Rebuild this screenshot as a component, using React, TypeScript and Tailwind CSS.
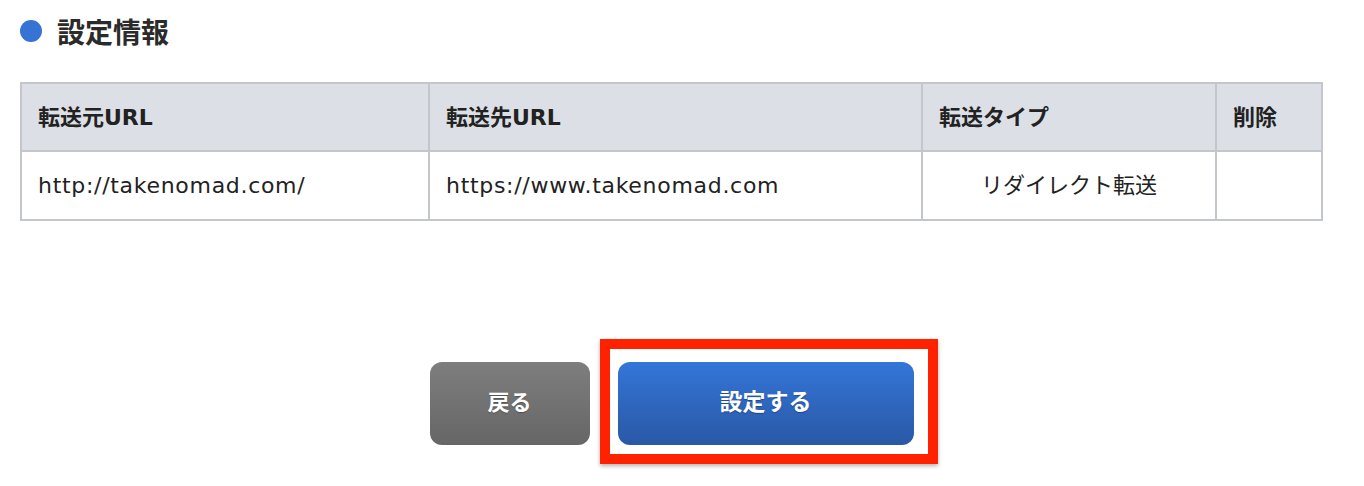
const font = { fontFamily: '"Noto Sans CJK JP", "Noto Sans", sans-serif' };
const latin = { fontFamily: '"DejaVu Sans", "Noto Sans CJK JP", sans-serif' };

const rows = [
  {
    from: "http://takenomad.com/",
    to: "https://www.takenomad.com",
    type: "リダイレクト転送",
  },
];

export default function App() {
  return (
    <main
      className="w-[1364px] h-[486px] bg-white text-[#333] pt-[20px]"
      style={font}
    >
      <div className="ml-[20px] w-[1303px]">
        {/* heading */}
        <div className="flex items-center h-[22px]">
          <span className="w-[22px] h-[22px] rounded-full bg-[#3573d5]" />
          <h2 className="ml-[15px] text-[28px] leading-[22px] font-bold text-[#2b2b2b]">
            設定情報
          </h2>
        </div>

        {/* table */}
        <table
          className="mt-[40px] w-full border-collapse border-2 border-[#c3c6ca] text-[22px] text-[#222]"
          style={latin}
        >
          <thead>
            <tr className="bg-[#dce0e6]">
              <th className="w-[408px] h-[68px] px-[16px] text-left font-bold border-2 border-[#c3c6ca]">
                転送元URL
              </th>
              <th className="w-[493px] px-[16px] text-left font-bold border-2 border-[#c3c6ca]">
                転送先URL
              </th>
              <th className="w-[294px] px-[16px] text-left font-bold border-2 border-[#c3c6ca]">
                転送タイプ
              </th>
              <th className="px-[16px] text-left font-bold border-2 border-[#c3c6ca]">
                削除
              </th>
            </tr>
          </thead>
          <tbody>
            {rows.map((r) => (
              <tr key={r.from}>
                <td className="h-[69px] px-[16px] tracking-[0.7px] border-2 border-[#c3c6ca]">
                  {r.from}
                </td>
                <td className="px-[16px] tracking-[0.7px] border-2 border-[#c3c6ca]">
                  {r.to}
                </td>
                <td className="px-[16px] text-center border-2 border-[#c3c6ca]">
                  {r.type}
                </td>
                <td className="border-2 border-[#c3c6ca]"></td>
              </tr>
            ))}
          </tbody>
        </table>

        {/* buttons */}
        <div className="mt-[141px] flex justify-center gap-[28px]">
          <button className="w-[160px] h-[83px] pb-[6px] rounded-[12px] bg-gradient-to-b from-[#7e7e7e] to-[#666666] text-white text-[22px] font-bold [text-shadow:0_1px_1px_rgba(0,0,0,0.3)]">
            戻る
          </button>
          <div className="relative">
            <button className="w-[296px] h-[83px] pb-[6px] rounded-[12px] bg-gradient-to-b from-[#3376d8] to-[#2a58a6] text-white text-[23px] font-bold [text-shadow:0_1px_1px_rgba(0,0,0,0.3)]">
              設定する
            </button>
            {/* annotation frame */}
            <div className="absolute left-[-18px] top-[-23px] w-[338px] h-[125px] border-[10px] border-[#ff2200] shadow-[0_2px_4px_rgba(0,0,0,0.3)] pointer-events-none" />
          </div>
        </div>
      </div>
    </main>
  );
}
